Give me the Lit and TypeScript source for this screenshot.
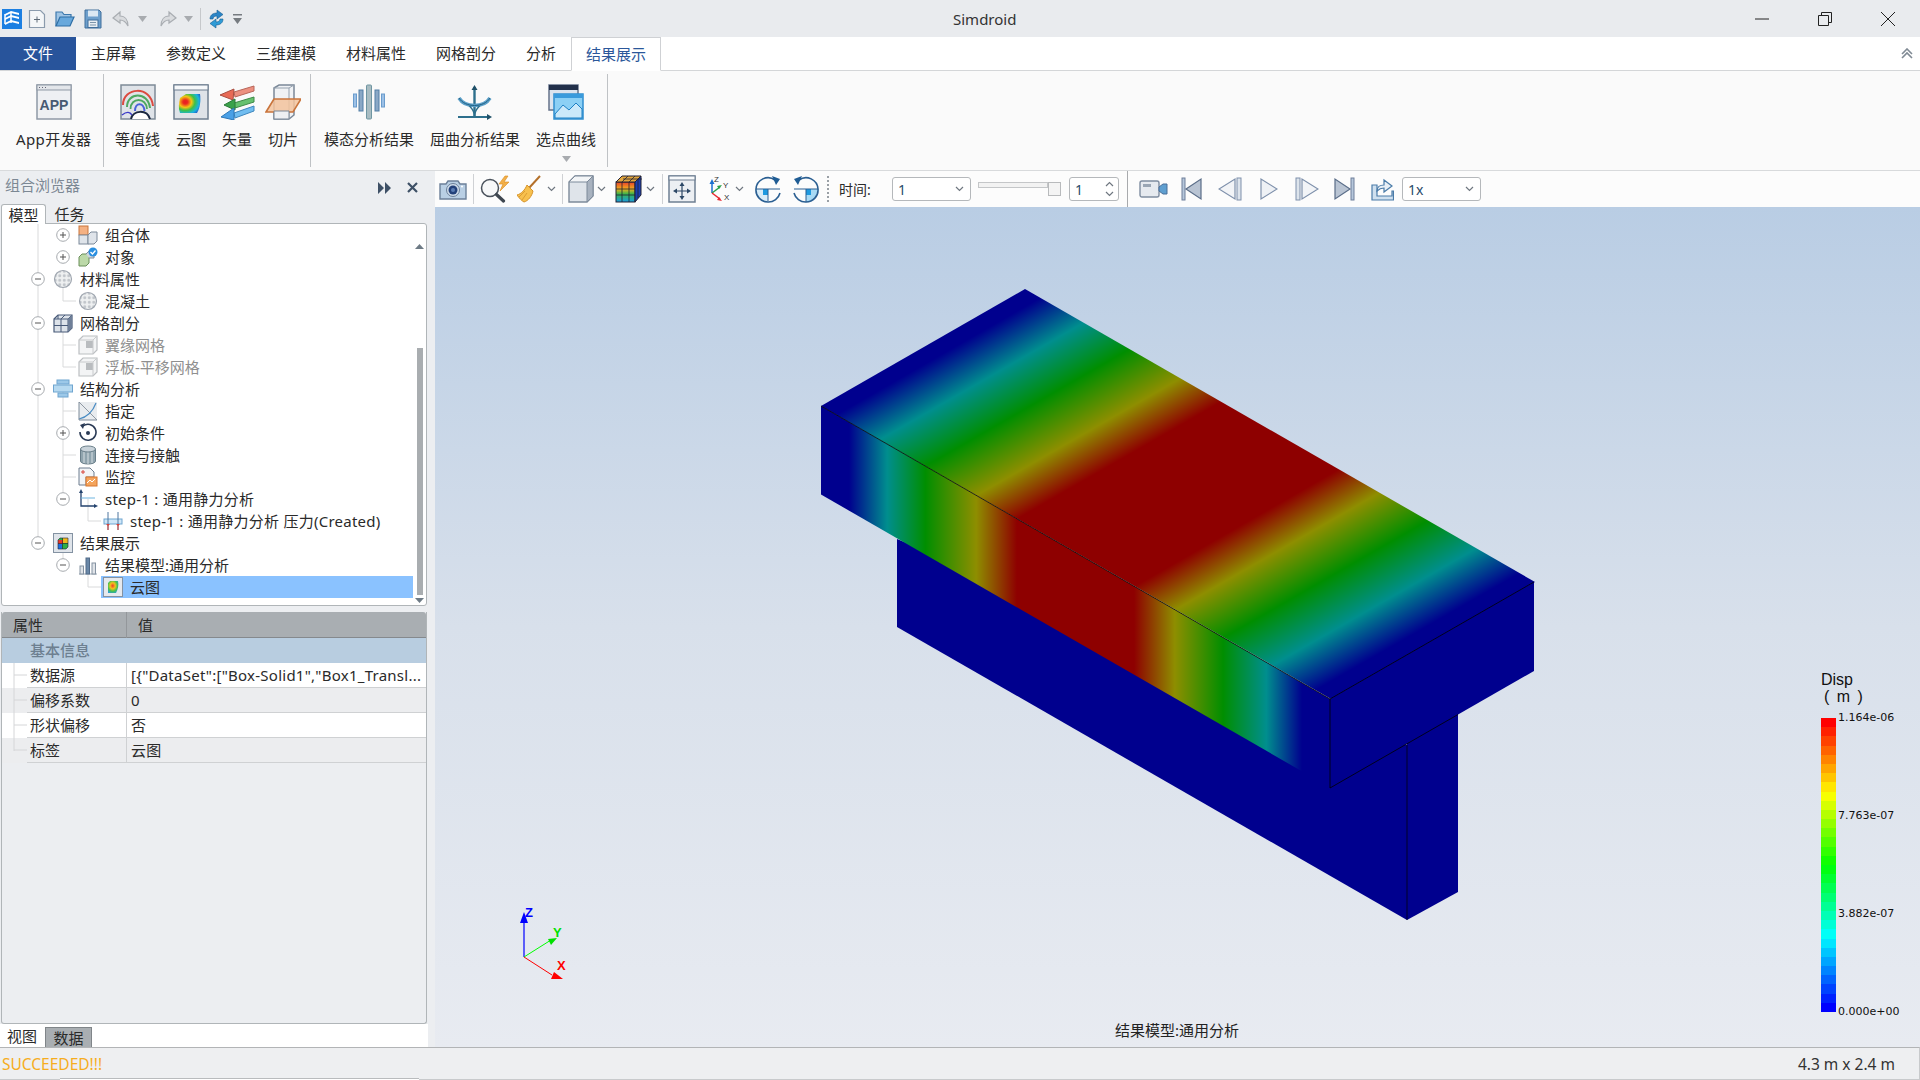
import { LitElement, html, svg, css } from "lit";
import { customElement } from "lit/decorators.js";

const chev = html`<svg width="9" height="6" viewBox="0 0 9 6"><path d="M1 1l3.5 3.5L8 1" fill="none" stroke="#6f7780" stroke-width="1.2"/></svg>`;
const win = (w: number, h: number, inner: unknown) => html`<svg width=${w} height=${h} viewBox="0 0 ${w} ${h}">${inner}</svg>`;

const qa = {
  app: html`<svg width="20" height="20" viewBox="0 0 20 20"><rect width="20" height="20" fill="#1c7fe2"/><path d="M3 5l6-3 8 2v2l-8-2-6 3zM3 9l6-3 8 2v2L9 8l-6 3zM3 14l6-3 8 2v2l-8-2-6 3z" fill="#fff"/><path d="M3 5v10M9 3v11" stroke="#fff" stroke-width="1.5"/></svg>`,
  file: html`<svg width="18" height="20" viewBox="0 0 18 20"><path d="M1.5 1.5h11l4 4v13h-15z" fill="#f4f6f8" stroke="#8b9bad" stroke-width="1.2"/><path d="M6 10.5h6M9 7.5v6" stroke="#5e6b78"/></svg>`,
  open: html`<svg width="20" height="18" viewBox="0 0 20 18"><path d="M1 16V2h6l2 2.5h7V7" fill="#9fc4e4" stroke="#3c78ad" stroke-width="1.2"/><path d="M1 16l4-9h14l-4 9z" fill="#68a8dc" stroke="#2e6ea5" stroke-width="1.2"/></svg>`,
  save: html`<svg width="18" height="20" viewBox="0 0 18 20"><path d="M1 1h14l2 2v16H1z" fill="#6d9fcc" stroke="#406e9b"/><rect x="4" y="1.5" width="10" height="6" fill="#dbe8f3"/><rect x="4" y="11" width="10" height="7.5" fill="#e9eef3" stroke="#406e9b"/><path d="M6 13.5h6M6 16h6" stroke="#7d95ab"/></svg>`,
  undo: html`<svg width="20" height="18" viewBox="0 0 20 18"><path d="M9 2L2 8l7 5V10c4 0 6 2 8 6 0-6-3-10-8-10z" fill="#d9dbde" stroke="#a9adb2" stroke-width="1.2"/></svg>`,
  redo: html`<svg width="20" height="18" viewBox="0 0 20 18"><path d="M11 2l7 6-7 5V10c-4 0-6 2-8 6 0-6 3-10 8-10z" fill="#d9dbde" stroke="#a9adb2" stroke-width="1.2"/></svg>`,
  caret: html`<svg width="9" height="6" viewBox="0 0 9 6"><path d="M0 0h9L4.5 6z" fill="#a8abaf"/></svg>`,
  refresh: html`<svg width="17" height="20" viewBox="0 0 17 20"><path d="M2 10c0-4 3-6 7-6V1l6 4.5L9 10V7c-2 0-4 1-4 3z" fill="#2a84c6" stroke="#1a5e90" stroke-width=".6"/><path d="M15 10c0 4-3 6-7 6v3l-6-4.5L8 10v3c2 0 4-1 4-3z" fill="#2f9bd6" stroke="#1a5e90" stroke-width=".6"/></svg>`,
  drop: html`<svg width="9" height="10" viewBox="0 0 9 10"><path d="M0 0h9v1.5H0zM0 4h9L4.5 10z" fill="#767b80"/></svg>`,
};

const rib = {
  app: win(36, 36, svg`<rect x="1" y="1" width="34" height="34" fill="#eef0f3" stroke="#8f99a6" stroke-width="1.5"/><rect x="1" y="1" width="34" height="5" fill="#e3e6ea" stroke="#8f99a6"/><path d="M3 3.500h1M6 3.500h1M9 3.500h1" stroke="#667"/><text x="18" y="26" text-anchor="middle" font-family="Liberation Sans, sans-serif" font-weight="700" font-size="14" fill="#475a73">APP</text>`),
  contour: win(36, 36, svg`<rect x="1" y="1" width="34" height="34" fill="#dfe3e8" stroke="#7e8a97" stroke-width="1.5"/><path d="M3 21C3 3 31 1 33 22" fill="none" stroke="#dc4a40" stroke-width="2"/><path d="M7 23C7 8 28 7 30 24" fill="none" stroke="#4ea860" stroke-width="2"/><path d="M10.500 25c0-12 16-12 16.500 0" fill="none" stroke="#4ea860" stroke-width="1.800"/><path d="M15 27c0-9 9-9 9.500 0" fill="none" stroke="#4a62d8" stroke-width="2"/><path d="M2 31c5-4 8-3 10 0" fill="none" stroke="#3a3ac8" stroke-width="1.400"/><path d="M11 35c2-9 16-10 19 0" fill="#fff" stroke="#1a2740" stroke-width="2"/>`),
  cloud: win(36, 36, svg`<defs><radialGradient id="rc" cx=".3" cy=".42" r=".8"><stop offset="0" stop-color="#e81c24"/><stop offset=".14" stop-color="#ec2c20"/><stop offset=".36" stop-color="#f4c414"/><stop offset=".56" stop-color="#3cc048"/><stop offset=".8" stop-color="#18b4e0"/><stop offset="1" stop-color="#2457c4"/></radialGradient></defs><rect x="1" y="1" width="34" height="34" fill="#dfe3e8" stroke="#6f7f90" stroke-width="1.5"/><rect x="1" y="1" width="34" height="5" fill="#f6f8fa" stroke="#6f7f90"/><path d="M7 14l6-4h14c1 7 0 14-3 19H7c-2-5-1-10 0-15z" fill="url(#rc)"/>`),
  vector: win(36, 36, svg`<path d="M15 8L35 2v5L16 13z" fill="#ec9080" stroke="#b8675a"/><path d="M15 5L1 11l13 5z" fill="#e86a55" stroke="#a94e40"/><path d="M15 19l20-6v5L16 24z" fill="#66c16e" stroke="#3f8a48"/><path d="M16 15L5 21l11 5z" fill="#3aa24a" stroke="#2b7a38"/><path d="M15 29l20-7v5l-19 7z" fill="#71bdf0" stroke="#3f86bd"/><path d="M15 24L2 33l13 3z" fill="#4aa0e6" stroke="#2f78b8"/>`),
  slice: win(36, 36, svg`<path d="M9 4l5-3h15v30l-5 4H9z" fill="#f0f2f5" stroke="#7b8898" stroke-width="1.5"/><path d="M9 4h15v31M24 4l5-3" fill="none" stroke="#95a1ae"/><path d="M9 15L1 28h27l8-13z" fill="#f3c39c" stroke="#c9743c" stroke-width="1.6" fill-opacity=".85"/><path d="M9 27h15v8H9z" fill="#eef0f3" stroke="#7b8898"/>`),
  modal: win(32, 36, svg`<rect x="13.500" y="1" width="5" height="34" rx="1" fill="#a8bcc2" stroke="#6f96a2"/><rect x="6" y="6" width="4" height="21" fill="#8aa8c6" stroke="#527fa6"/><rect x="22" y="6" width="4" height="21" fill="#8aa8c6" stroke="#527fa6"/><rect x="0.500" y="10" width="3" height="13" fill="#9cc0e6" stroke="#6a9ccc"/><rect x="28.500" y="10" width="3" height="13" fill="#9cc0e6" stroke="#6a9ccc"/>`),
  buckle: win(36, 36, svg`<path d="M1 33h31" stroke="#2d6f8c" stroke-width="2"/><path d="M35 33l-5-3v6z" fill="#1f5068"/><path d="M17.500 3v29" stroke="#2d6f8c" stroke-width="2.400"/><path d="M17.500 1l-3 5h6z" fill="#1f5068"/><path d="M2 14c6 10 25 10 31 0" fill="none" stroke="#5b9fc8" stroke-width="3.500"/><path d="M2 14c6 10 25 10 31 0" fill="none" stroke="#1f5f82" stroke-width="1"/><path d="M17.500 32c0-5-3-8-5-10M17.500 32c0-5 3-8 5-10" fill="none" stroke="#2d6f8c" stroke-width="1.500"/>`),
  curve: win(36, 36, svg`<rect x="1" y="1" width="29" height="25" fill="#dce4ee" stroke="#66738a" stroke-width="1.500"/><rect x="1" y="1" width="29" height="5" fill="#22304a"/><rect x="6" y="10" width="29" height="25" fill="#8cd0f5" stroke="#2f8ed0" stroke-width="1.500"/><rect x="6" y="10" width="29" height="4" fill="#3a9bdc"/><path d="M7 30l8-9 6 5 7-7 6 6v9H7z" fill="#cbe9fa" stroke="#1f80c4"/>`),
};

const tool = {
  camera: win(28, 22, svg`<path d="M1 6h6l2-3h10l2 3h6v15H1z" fill="#b9cfe4" stroke="#6c8099" stroke-width="1.400"/><circle cx="14" cy="12" r="6.500" fill="#cfdcea" stroke="#6c8099"/><circle cx="14" cy="12" r="4.500" fill="#23417a"/><circle cx="14" cy="12" r="2" fill="#5a7cb4"/><circle cx="23" cy="8.500" r="1" fill="#fff"/>`),
  mag: win(30, 28, svg`<circle cx="10" cy="13" r="8.500" fill="#f7f8f9" stroke="#4a525c" stroke-width="1.500"/><path d="M16.500 19.500l7 6.500" stroke="#3f4750" stroke-width="3.200" stroke-linecap="round"/><path d="M25 1l-6 8h4l-3 7 9-9h-5l4-6z" fill="#f2b04a" stroke="#d88a1c" stroke-width=".6"/>`),
  broom: win(24, 28, svg`<path d="M23 1L12 13" stroke="#b4702a" stroke-width="2"/><path d="M10 10l6 6c-1 5-5 10-9 11-2-1-5-4-7-7 4-1 8-5 10-10z" fill="#f7c04e" stroke="#d6932a"/><path d="M5 25l5-7M2 22l6-6" stroke="#d6932a" stroke-width=".8"/>`),
  cube: win(26, 28, svg`<path d="M1 7l6-6h18v20l-6 6H1z" fill="#dfe4ea" stroke="#7d8a9a" stroke-width="1.400"/><path d="M19 7v20l6-6V1z" fill="#a8b2bf" stroke="#7d8a9a"/><path d="M1 7h18l6-6H7z" fill="#f3f5f7" stroke="#7d8a9a"/>`),
  color: win(27, 28, svg`<defs><linearGradient id="cc" x1="0" y1="0" x2="0" y2="1"><stop offset="0" stop-color="#e8402c"/><stop offset=".35" stop-color="#f2b01c"/><stop offset=".6" stop-color="#37b64c"/><stop offset="1" stop-color="#1a9be0"/></linearGradient></defs><rect x="1" y="7" width="19" height="20" fill="url(#cc)" stroke="#223"/><path d="M1 7l6-6h19l-6 6z" fill="#e2a63e" stroke="#223"/><path d="M20 7l6-6v19l-6 7z" fill="#1c3fb0" stroke="#223"/><path d="M7 7v20M14 7v20M1 14h19M1 20h19M8 4h19M13 1l-6 6M20 1l-6 6M23 4v19" stroke="#223" stroke-width=".8"/>`),
  fit: win(28, 28, svg`<rect x="1" y="1" width="26" height="26" fill="#eceff3" stroke="#6e7f92" stroke-width="1.500"/><rect x="1" y="1" width="26" height="4" fill="#f7f9fb" stroke="#6e7f92"/><path d="M14 9v14M7 16h14" stroke="#2c4766" stroke-width="1.200"/><path d="M14 7l-2.500 4h5zM14 25l-2.500-4h5zM5 16l4-2.500v5zM23 16l-4-2.500v5z" fill="#2c4766"/>`),
  axes: html`<svg width="24" height="28" viewBox="0 0 24 28"><path d="M4 18V7" stroke="#1d6fd0" stroke-width="1.500"/><path d="M4 4L1.500 9h5z" fill="#1d6fd0"/><path d="M4 18l8-6" stroke="#27a04a" stroke-width="1.500"/><path d="M14 10l-5 1 2 3z" fill="#27a04a"/><path d="M4 18l8 6" stroke="#e82830" stroke-width="1.500"/><path d="M14 26l-5-1 2-3z" fill="#e82830"/><text x="6" y="7" font-size="8" font-family="Liberation Sans, sans-serif" fill="#333">Z</text><text x="15" y="13" font-size="8" font-family="Liberation Sans, sans-serif" fill="#333">Y</text><text x="16" y="25" font-size="8" font-family="Liberation Sans, sans-serif" fill="#333">X</text></svg>`,
  rot1: win(26, 28, svg`<path d="M1 14h12v13C6 27 1 21 1 14z" fill="#d8ecf8"/><path d="M13 14h12" stroke="#2b5f92"/><rect x="8" y="14" width="5" height="6" fill="#1e9ae0"/><path d="M1 14h12v12" fill="none" stroke="#2b5f92"/><path d="M20 5A12 12 0 0 0 1 14a12 12 0 0 0 12 13 12 12 0 0 0 12-9" fill="none" stroke="#2b5f92" stroke-width="1.600"/><path d="M17 1l8 3-4 6z" fill="#1f5c94"/>`),
  rot2: win(26, 28, svg`<path d="M13 14h12c0 7-5 13-12 13z" fill="#a8daf5"/><rect x="13" y="14" width="5" height="6" fill="#1e9ae0"/><path d="M1 14h24M13 14v13" stroke="#2b5f92"/><path d="M6 5A12 12 0 0 1 25 14a12 12 0 0 1-12 13A12 12 0 0 1 1 18" fill="none" stroke="#2b5f92" stroke-width="1.600"/><path d="M9 1L1 4l4 6z" fill="#1f5c94"/>`),
  video: win(29, 20, svg`<rect x="1" y="2" width="19" height="16" rx="2" fill="#e6eaef" stroke="#7f8da0" stroke-width="1.400"/><rect x="4" y="5" width="8" height="3" fill="#9aa6b4"/><path d="M20 8l4-3h4v10h-4l-4-3z" fill="#5f9fd0" stroke="#4a6f99"/>`),
  first: win(21, 24, svg`<rect x="1" y="1" width="3" height="22" fill="#b6c7db" stroke="#6e7f9a"/><path d="M20 2v20L5 12z" fill="#b9c4d3" stroke="#5a6d88" stroke-width="1.200"/>`),
  prev: win(24, 24, svg`<path d="M17 2v20L1 12z" fill="#f2f4f7" stroke="#7e90ab" stroke-width="1.200"/><rect x="19" y="1" width="4" height="22" fill="#dde4ec" stroke="#7e90ab"/>`),
  play: win(18, 24, svg`<path d="M1 2v20l16-10z" fill="#eef1f5" stroke="#7e90ab" stroke-width="1.200"/>`),
  next: win(24, 24, svg`<rect x="1" y="1" width="4" height="22" fill="#dde4ec" stroke="#7e90ab"/><path d="M7 2v20l16-10z" fill="#f2f4f7" stroke="#7e90ab" stroke-width="1.200"/>`),
  last: win(21, 24, svg`<path d="M1 2v20l15-10z" fill="#b9c4d3" stroke="#5a6d88" stroke-width="1.200"/><rect x="17" y="1" width="3" height="22" fill="#b6c7db" stroke="#6e7f9a"/>`),
  share: win(23, 24, svg`<path d="M1 8h5v11h15v-5h1.500v9H1z" fill="#cfe0ef" stroke="#4a7ba8" stroke-width="1.200"/><path d="M6 14c0-4 3-6 7-6V3l8 6-8 6v-4c-3 0-5 1-7 3z" fill="#e8eff6" stroke="#4a7ba8" stroke-width="1.200"/>`),
};

const tree = {
  combo: win(20, 20, svg`<rect x="1" y="1" width="9" height="9" fill="#f4b183" stroke="#c9763c"/><rect x="1" y="10" width="9" height="9" fill="#dfe4ea" stroke="#7d8a9a"/><path d="M10 10l3-3h6v9l-3 3h-6z" fill="#dfe4ea" stroke="#7d8a9a"/>`),
  object: win(20, 20, svg`<path d="M1 10l3-3h7v9l-3 3H1z" fill="#bcd9a8" stroke="#6a8f5a"/><path d="M8 7l3-3h5v7h-5" fill="#cfd6dd" stroke="#7d8a9a"/><circle cx="15" cy="5" r="4.500" fill="#2a8fe0"/><path d="M12.500 5l2 2 3-3.500" fill="none" stroke="#fff" stroke-width="1.300"/>`),
  mat: win(20, 20, svg`<defs><pattern id="dots" width="4.500" height="4.500" patternUnits="userSpaceOnUse"><rect width="4.500" height="4.500" fill="#eef0f1"/><circle cx="2.250" cy="2.250" r="1.500" fill="#c0c5ca"/></pattern></defs><circle cx="10" cy="10" r="8.500" fill="url(#dots)" stroke="#a0a7b0" stroke-width="1.200"/>`),
  mesh: win(20, 20, svg`<path d="M1 6l4-4h14v13l-4 4H1z" fill="#dde3ea" stroke="#485a78" stroke-width="1.200"/><path d="M1 6h14v13M15 6l4-4M1 12.500h14M8 6v13M5 2v4M12 2L8 6" fill="none" stroke="#485a78"/><path d="M15 6l4-4v13l-4 4z" fill="#6f7f98"/>`),
  meshg: win(20, 20, svg`<path d="M1 5l4-4h14v14l-4 4H1z" fill="#f3f4f5" stroke="#bcbfc2" stroke-width="1.200"/><rect x="8" y="6" width="7" height="7" fill="#b9bcbf"/><path d="M1 5h14v14M15 5l4-4" fill="none" stroke="#c8cacc"/>`),
  struct: win(20, 20, svg`<rect x="4" y="1" width="12" height="4" fill="#9cc8e8" stroke="#6fa5d0"/><rect x="0.500" y="6" width="19" height="7" fill="#b6d9f0" stroke="#6fa5d0"/><rect x="5" y="14" width="10" height="4" fill="#9cc8e8" stroke="#6fa5d0"/>`),
  assign: win(20, 20, svg`<rect x="1" y="1" width="18" height="18" fill="#e9ecef"/><path d="M1 1l18 18" stroke="#8f98a3"/><path d="M1 18c9-2 14-8 17-16" fill="none" stroke="#4b8dc4" stroke-width="1.200"/><path d="M1 1v18h18" fill="none" stroke="#7c8a99"/>`),
  init: win(20, 20, svg`<path d="M5 3a8 8 0 1 1-3 6" fill="none" stroke="#2a3a55" stroke-width="1.600"/><path d="M7 0L2 2l3 4z" fill="#2a3a55"/><circle cx="10" cy="10" r="2" fill="#2a3a55"/>`),
  contact: win(18, 20, svg`<path d="M1.500 4v12c0 4 15 4 15 0V4" fill="#90a4ae" stroke="#6a7f8a"/><path d="M5 6v12M9 7v12M13 6v12" stroke="#d8e0e4"/><ellipse cx="9" cy="4" rx="7.500" ry="3" fill="#c9d3da" stroke="#6a7f8a"/>`),
  monitor: win(20, 20, svg`<path d="M1 1h11l4 4v5H8v8H1z" fill="#f2f4f6" stroke="#6d7d8f"/><path d="M3 5h4M5 3v4" stroke="#d8453a"/><rect x="8" y="10" width="11" height="9" fill="#f4a45c" stroke="#d9772c"/><path d="M9 16l3-3 2 2 3-3" fill="none" stroke="#fff"/>`),
  step: win(20, 20, svg`<path d="M3 3v14h15" fill="none" stroke="#24436e" stroke-width="1.300"/><path d="M3 0L1 4h4zM20 17l-4-2v4z" fill="#24436e"/><path d="M3 9h14" stroke="#6fb5e0"/>`),
  load: win(20, 20, svg`<rect x="1" y="8" width="18" height="5" fill="#cfe6f7" stroke="#6fa5d0"/><path d="M5 1v18M15 1v18" stroke="#4e76a0"/><path d="M5 15l-2-2h4zM15 15l-2-2h4z" fill="#d8453a"/><path d="M5 14v5M15 14v5" stroke="#d8453a"/>`),
  result: win(20, 20, svg`<rect x=".5" y=".5" width="19" height="19" fill="#dfe4ea" stroke="#8492a2"/><path d="M5 7l2-2h8v9l-2 2H5z" fill="#2fae45"/><path d="M5 7h5v4H5z" fill="#e8392a"/><path d="M10 5h5v5h-5z" fill="#f0b61e"/><path d="M5 11h4v5H5z" fill="#1e6fe0"/><path d="M5 7l2-2h8v9l-2 2H5zM9.500 5v11M5 10.500h10" fill="none" stroke="#223" stroke-width=".6"/>`),
  model: win(20, 20, svg`<path d="M1 19h18" stroke="#9aa6b2"/><rect x="2" y="11" width="3.500" height="8" fill="#dfe3e8" stroke="#8593a2"/><rect x="8" y="3" width="3.500" height="16" fill="#6a88a8" stroke="#506a88"/><rect x="14" y="8" width="3.500" height="11" fill="#dfe3e8" stroke="#8593a2"/>`),
  cloud: win(20, 20, svg`<defs><radialGradient id="tc" cx=".45" cy=".4" r=".7"><stop offset="0" stop-color="#ef3a2c"/><stop offset=".35" stop-color="#f2c21c"/><stop offset=".65" stop-color="#45c24d"/><stop offset="1" stop-color="#2a9ae0"/></radialGradient></defs><rect x=".5" y=".5" width="19" height="19" fill="#e6e9ed" stroke="#8492a2"/><path d="M5 6l2-2h8c1 4 0 8-2 12H5z" fill="url(#tc)"/>`),
};

type Row = { lvl: number; exp?: string; icon: keyof typeof tree; label: string; dim?: boolean; sel?: boolean };
const rows: Row[] = [
  { lvl: 1, exp: "+", icon: "combo", label: "组合体" },
  { lvl: 1, exp: "+", icon: "object", label: "对象" },
  { lvl: 0, exp: "-", icon: "mat", label: "材料属性" },
  { lvl: 1, icon: "mat", label: "混凝土" },
  { lvl: 0, exp: "-", icon: "mesh", label: "网格剖分" },
  { lvl: 1, icon: "meshg", label: "翼缘网格", dim: true },
  { lvl: 1, icon: "meshg", label: "浮板-平移网格", dim: true },
  { lvl: 0, exp: "-", icon: "struct", label: "结构分析" },
  { lvl: 1, icon: "assign", label: "指定" },
  { lvl: 1, exp: "+", icon: "init", label: "初始条件" },
  { lvl: 1, icon: "contact", label: "连接与接触" },
  { lvl: 1, icon: "monitor", label: "监控" },
  { lvl: 1, exp: "-", icon: "step", label: "step-1 : 通用静力分析" },
  { lvl: 2, icon: "load", label: "step-1 : 通用静力分析 压力(Created)" },
  { lvl: 0, exp: "-", icon: "result", label: "结果展示" },
  { lvl: 1, exp: "-", icon: "model", label: "结果模型:通用分析" },
  { lvl: 2, icon: "cloud", label: "云图", sel: true },
];

const props = [
  { k: "数据源", v: '[{"DataSet":["Box-Solid1","Box1_Transl...' },
  { k: "偏移系数", v: "0" },
  { k: "形状偏移", v: "否" },
  { k: "标签", v: "云图" },
];

const ry = (i: number) => 11 + 22 * i;
const hook = (x: number, i: number, x2: number) => `M${x} ${ry(i)}H${x2}`;
const guides = [
  `M36 0V${ry(14)}`,
  `M61 ${ry(2)}V${ry(3)}`, hook(61, 3, 74),
  `M61 ${ry(4)}V${ry(6)}`, hook(61, 5, 74), hook(61, 6, 74),
  `M61 ${ry(7)}V${ry(12)}`, hook(61, 8, 74), hook(61, 10, 74), hook(61, 11, 74),
  `M61 ${ry(14)}V${ry(15)}`,
  `M86 ${ry(12)}V${ry(13)}`, hook(86, 13, 99),
  `M86 ${ry(15)}V${ry(16)}`, hook(86, 16, 99),
].join("");

// legend colours, bottom to top of the scale
const legendBands = (() => {
  const stops = [[0, 0, 255], [0, 255, 255], [0, 255, 0], [255, 255, 0], [255, 0, 0]];
  const out: string[] = [];
  const n = 32;
  for (let i = n - 1; i >= 0; i--) {
    const t = (i / (n - 1)) * 4;
    const a = Math.min(Math.floor(t), 3);
    const f = t - a;
    const c = stops[a].map((v, j) => Math.round(v + (stops[a + 1][j] - v) * f));
    out.push(`rgb(${c.join(",")})`);
  }
  return out;
})();

// contour stops along the beam, the side face runs a bit wider at both ends
const blue = "#00008e";
const bandStops = (a: number, b: number, c: number, d: number): [number, string][] => [
  [0, blue], [a, blue], [b, "#008e8e"],
  [0.205, "#008e00"], [0.305, "#8e8e00"], [0.385, "#8e0000"],
  [0.615, "#8e0000"], [0.695, "#8e8e00"], [0.79, "#008e00"],
  [c, "#008e8e"], [d, blue], [1, blue],
];
const stopEls = (list: [number, string][]) => list.map(([o, col]) => svg`<stop offset=${o} stop-color=${col}/>`);

@customElement("app-root")
export class AppRoot extends LitElement {
  static styles = css`
    :host {
      display: block;
      width: 1920px;
      height: 1080px;
      overflow: hidden;
      font-family: "Noto Sans", "Noto Sans CJK SC", sans-serif;
      font-size: 15px;
      color: #2a2a2a;
      background: #eceef1;
    }
    svg { display: block; flex: none; }

    .app { display: flex; flex-direction: column; height: 100%; }

    .title { display: grid; grid-template-columns: 953px 1fr auto; align-items: center; height: 37px; background: #e9ebee; }
    .qa { display: grid; grid-template-columns: 26px 27px 29px 27px 27px 20px 26px 16px 8px 25px auto; align-items: center; padding-left: 2px; }
    .qa .sep { width: 1px; height: 22px; background: #c6c8cb; }
    .title-text { font-size: 15px; color: #333; }
    .winbtns { display: flex; padding-right: 1px; }
    .winbtn { width: 63px; height: 37px; display: flex; align-items: center; justify-content: center; }

    .tabs { display: flex; align-items: stretch; height: 33px; background: #fff; border-bottom: 1px solid #d4d6d8; }
    .tab { padding: 0 15px; line-height: 32px; white-space: nowrap; }
    .tab.file { width: 76px; box-sizing: border-box; text-align: center; background: #28549b; color: #fff; }
    .tab.active { color: #2b579a; border: 1px solid #cfd1d4; border-bottom: 1px solid #fff; margin-bottom: -1px; padding: 0 14px; line-height: 32px; background: #fff; }
    .tabs-end { flex: 1; display: flex; align-items: center; justify-content: flex-end; padding-right: 7px; }

    .ribbon { display: flex; height: 99px; background: #fafafa; border-bottom: 1px solid #d8dadc; padding-left: 11px; }
    .group { display: flex; box-sizing: border-box; border-right: 1px solid #bfc2c5; margin: 3px 0; }
    .rbtn { display: flex; flex-direction: column; align-items: center; padding: 10px 5px 0; white-space: nowrap; }
    .rbtn .ic { height: 36px; display: flex; align-items: center; }
    .rbtn .lb { margin-top: 8px; line-height: 22px; font-size: 15px; }
    .rbtn .more { margin-top: 6px; }
    .rbtn.wide { padding-right: 8px; }
    .g1 { width: 93px; }
    .g1 .lb { letter-spacing: .4px; }
    .g2 { width: 207px; padding-left: 6px; }
    .g3 { width: 297px; padding-left: 5px; }
    .g3 .rbtn { padding-left: 8px; padding-right: 8px; }

    .main { flex: 1; display: flex; min-height: 0; }

    .left { width: 428px; display: flex; flex-direction: column; background: #eceef1; flex: none; }
    .lhead { height: 33px; display: flex; align-items: center; padding: 0 10px 0 5px; color: #7c8894; font-size: 15px; }
    .lhead .name { line-height: 26px; margin-bottom: 5px; }
    .lhead .sp { flex: 1; }
    .lhead .x { margin-left: 16px; }
    .ltabs { display: flex; height: 19px; padding-left: 1px; align-items: flex-start; position: relative; z-index: 1; }
    .ltab { width: 45px; box-sizing: border-box; height: 20px; line-height: 20px; text-align: center; }
    .ltab.on { background: #fff; border: 1px solid #b0b5b8; border-bottom: none; border-radius: 3px 3px 0 0; }
    .ltab.off { margin-left: 1px; }
    .treebox { height: 383px; margin: 0 1px; box-sizing: border-box; background: #fff; border: 1px solid #b0b5b8; border-radius: 0 3px 3px 3px; display: flex; overflow: hidden; }
    .rows { width: 411px; position: relative; flex: none; }
    .rows .guides { position: absolute; left: 0; top: 0; }
    .row { display: flex; align-items: center; height: 22px; position: relative; white-space: nowrap; }
    .slot { width: 22px; height: 22px; display: flex; align-items: center; justify-content: center; flex: none; }
    .item { flex: 1; display: flex; align-items: center; height: 22px; min-width: 0; margin-left: 2px; }
    .item .ic { width: 24px; display: flex; justify-content: center; flex: none; }
    .item .tx { margin-left: 5px; line-height: 22px; }
    .item .tx.lat { letter-spacing: .25px; }
    .item.sel { background: #8ac2ff; }
    .row.dim .tx { color: #8f8f8f; }
    .sbar { flex: 1; display: flex; flex-direction: column; align-items: center; padding-top: 20px; }
    .sbar .track { flex: 1; width: 6px; display: flex; flex-direction: column; justify-content: flex-end; margin: 3px 0; }
    .sbar .thumb { height: 247px; background: #a9adb0; }
    .sbar .dn { margin-bottom: 2px; }

    .grid { flex: 1; margin: 6px 1px 0; border: 1px solid #b0b5b8; border-top: none; border-radius: 0 0 3px 3px; background: #eceef1; display: flex; flex-direction: column; position: relative; min-height: 0; }
    .ghead { display: grid; grid-template-columns: 124px 1fr; height: 26px; line-height: 26px; background: #a9aeb2; border-bottom: 1px solid #85898d; box-sizing: border-box; border-radius: 3px 3px 0 0; }
    .ghead div { padding-left: 11px; }
    .ghead div + div { border-left: 1px solid #93979b; }
    .gcat { height: 25px; line-height: 25px; background: #b8cde0; padding-left: 28px; color: #6d7f90; font-weight: 500; }
    .grow { display: grid; grid-template-columns: 124px 1fr; height: 25px; line-height: 24px; background: #fff; }
    .grow.alt { background: #ecedef; }
    .grow .k { margin-left: 25px; padding-left: 3px; border-bottom: 1px solid #cfd1d3; }
    .grow .v { padding-left: 4px; border-left: 1px solid #cfd1d3; border-bottom: 1px solid #cfd1d3; white-space: nowrap; overflow: hidden; letter-spacing: .25px; }
    .grid .pguide { position: absolute; left: 0; top: 51px; }
    .btabs { height: 23px; background: #fff; display: flex; align-items: flex-end; padding-left: 7px; }
    .btab { line-height: 22px; }
    .btab.on { margin-left: 8px; width: 47px; box-sizing: border-box; height: 20px; line-height: 20px; text-align: center; background: #a9aeb2; border: 1px solid #808589; border-bottom: none; }

    .gutter { width: 7px; flex: none; background: #eceef1; }
    .right { flex: 1; display: flex; flex-direction: column; min-width: 0; }
    .tools { height: 36px; background: #fcfcfc; display: grid; align-items: center; padding-left: 4px;
      grid-template-columns: 34px 7px 37px 30px 15px 6px 29px 18px 31px 16px 6px 40px 27px 20px 38px 34px 12px 53px 86px 91px 58px 12px 42px 37px 42px 35px 39px 37px 31px 1fr; }
    .vsep { width: 1px; height: 30px; background: #cfd1d4; }
    .vsep.dark { height: 36px; background: #a8aaad; }
    .dots { width: 2px; height: 26px; background: repeating-linear-gradient(#9aa0a6 0 2px, transparent 2px 4px); }
    .combo { height: 24px; box-sizing: border-box; border: 1px solid #b5b8bb; border-radius: 3px; background: #fff; display: flex; align-items: center; justify-content: space-between; padding: 0 6px 0 5px; font-size: 14px; color: #2a4a6a; }
    .combo.w79 { width: 79px; }
    .combo.w50 { width: 50px; padding-right: 4px; }
    .spin { display: flex; flex-direction: column; gap: 4px; }
    .slider { width: 83px; display: flex; align-items: flex-start; height: 14px; }
    .slider .rail { flex: 1; height: 4px; background: #f2f2f2; border: 1px solid #c4c6c8; }
    .slider .knob { width: 11px; height: 12px; background: #f4f4f4; border: 1px solid #b8babc; }
    .time { font-size: 14px; white-space: nowrap; }

    .view { flex: 1; position: relative; background: linear-gradient(#b9cde4, #d8e0eb 50%, #e8ebf1); overflow: hidden; }
    .canvas { position: absolute; left: 0; top: 0; }
    .legend { position: absolute; left: 1386px; top: 464px; width: 110px; }
    .legend .t { font-family: "Liberation Sans", sans-serif; font-size: 16px; line-height: 17px; color: #111; }
    .legend .u { padding-left: 3px; letter-spacing: 1.5px; }
    .lbody { display: flex; margin-top: 13px; }
    .bar { width: 15px; height: 294px; display: flex; flex-direction: column; flex: none; }
    .bar div { flex: 1; }
    .ticks { margin-top: -6px; margin-left: 2px; display: flex; flex-direction: column; justify-content: space-between; height: 306px; font-family: "DejaVu Sans", sans-serif; font-size: 11px; line-height: 12px; color: #111; }
    .caption { position: absolute; left: 0; right: 0; bottom: 9px; text-align: center; font-size: 15px; line-height: 16px; color: #222; margin-left: -1px; }

    .status { height: 33px; box-sizing: border-box; background: #eeeff1; border-top: 1px solid #b2b4b6; border-bottom: 1px solid #c8cacc; border-right: 1px solid #c8cacc; display: flex; align-items: center; justify-content: space-between; padding: 0 24px 0 2px; position: relative; }
    .status::after { content: ""; position: absolute; left: 60px; bottom: -1px; width: 359px; height: 1px; border-top: 1px solid #b9bbbd; background: #fff; }
    .ok { color: #f6ad1e; font-size: 15.500px; }
    .size { color: #333; font-size: 15.500px; }
  `;

  private qaBar() {
    return html`<div class="qa">
      ${qa.app}${qa.file}${qa.open}${qa.save}${qa.undo}${qa.caret}${qa.redo}${qa.caret}<div class="sep"></div>${qa.refresh}${qa.drop}
    </div>`;
  }

  private ribbonBtn(icon: unknown, label: string, cls = "", more = false) {
    return html`<div class="rbtn ${cls}"><div class="ic">${icon}</div><div class="lb">${label}</div>
      ${more ? html`<div class="more">${qa.caret}</div>` : ""}</div>`;
  }

  private treeRow(r: Row) {
    const pad = 25 + 25 * r.lvl;
    const exp = r.exp
      ? html`<svg width="14" height="14" viewBox="0 0 14 14"><circle cx="7" cy="7" r="6.300" fill="#fff" stroke="#a6aaae"/><path d="M4 7h6${r.exp === "+" ? "M7 4v6" : ""}" stroke="#555"/></svg>`
      : "";
    return html`<div class="row ${r.dim ? "dim" : ""}" style="padding-left:${pad}px">
      <div class="slot">${exp}</div>
      <div class="item ${r.sel ? "sel" : ""}"><div class="ic">${tree[r.icon]}</div><div class="tx ${/[a-z]/i.test(r.label) ? "lat" : ""}">${r.label}</div></div>
    </div>`;
  }

  private toolbar() {
    return html`<div class="tools">
      ${tool.camera}<div class="vsep"></div>${tool.mag}${tool.broom}${chev}<div class="vsep"></div>
      ${tool.cube}${chev}${tool.color}${chev}<div class="vsep"></div>
      ${tool.fit}${tool.axes}${chev}${tool.rot1}${tool.rot2}<div class="dots"></div>
      <div class="time">时间:</div>
      <div class="combo w79"><span>1</span>${chev}</div>
      <div class="slider"><div class="rail"></div><div class="knob"></div></div>
      <div class="combo w50"><span>1</span><div class="spin"><svg width="9" height="6" viewBox="0 0 9 6"><path d="M1 5l3.500-3.500L8 5" fill="none" stroke="#6f7780" stroke-width="1.200"/></svg>${chev}</div></div>
      <div class="vsep dark"></div>
      ${tool.video}${tool.first}${tool.prev}${tool.play}${tool.next}${tool.last}${tool.share}
      <div class="combo w79"><span>1x</span>${chev}</div>
    </div>`;
  }

  private model() {
    // page coordinates, the viewBox starts where the view does
    return html`<svg class="canvas" width="1485" height="840" viewBox="435 207 1485 840">
      <defs>
        <linearGradient id="bandTop">${stopEls(bandStops(0.03, 0.115, 0.885, 0.97))}</linearGradient>
        <linearGradient id="bandSide">${stopEls(bandStops(0.055, 0.13, 0.875, 0.945))}</linearGradient>
      </defs>
      <path d="M897 539L1407 745V920L897 627Z" fill=${blue}/>
      <path d="M1407 735L1458 705V892L1407 920Z" fill=${blue}/>
      <path d="M1407 745V920" stroke="#000" stroke-width=".7" fill="none"/>
      <path d="M1330 699L1534 582V671L1330 788Z" fill=${blue}/>
      <rect width="1" height="1" fill="url(#bandSide)" transform="matrix(509 293 0 88.500 821 406)"/>
      <rect width="1" height="1" fill="url(#bandTop)" transform="matrix(510 293 -204 117 1025 289)"/>
      <path d="M821 406L1330 699L1534 582M1330 699V788L1458 714.500" fill="none" stroke="#000" stroke-width=".8"/>
      <g font-family="Liberation Sans, sans-serif" font-weight="700" font-size="13">
        <path d="M524 957V921" stroke="#0000ff" stroke-width="1.200"/><path d="M524 912l-4 11h8z" fill="#0000ff"/>
        <text x="525" y="917" fill="#0000ff">Z</text>
        <path d="M524 957L551 940" stroke="#00ff00"/><path d="M557 938l-9 1 3 6z" fill="#00e000"/>
        <text x="553" y="937" fill="#00e000">Y</text>
        <path d="M524 957L552 975" stroke="#ff0000"/><path d="M563 979l-9-7-3 7z" fill="#ff0000"/>
        <text x="557" y="970" fill="#ff0000">X</text>
      </g>
    </svg>`;
  }

  render() {
    return html`<div class="app">
      <div class="title">
        ${this.qaBar()}
        <div class="title-text">Simdroid</div>
        <div class="winbtns">
          <div class="winbtn"><svg width="14" height="2" viewBox="0 0 14 2"><path d="M0 1h14" stroke="#222"/></svg></div>
          <div class="winbtn"><svg width="14" height="14" viewBox="0 0 14 14"><path d="M3.500 3V.5h10v10H11M.5 3.500h10v10H.5z" fill="none" stroke="#222"/></svg></div>
          <div class="winbtn"><svg width="14" height="14" viewBox="0 0 14 14"><path d="M0 0l14 14M14 0L0 14" stroke="#222"/></svg></div>
        </div>
      </div>

      <div class="tabs">
        <div class="tab file">文件</div>
        ${["主屏幕", "参数定义", "三维建模", "材料属性", "网格剖分", "分析"].map((t) => html`<div class="tab">${t}</div>`)}
        <div class="tab active">结果展示</div>
        <div class="tabs-end"><svg width="12" height="11" viewBox="0 0 12 11"><path d="M1 6l5-5 5 5M1 10l5-5 5 5" fill="none" stroke="#808a94" stroke-width="1.600"/></svg></div>
      </div>

      <div class="ribbon">
        <div class="group g1">${this.ribbonBtn(rib.app, "App开发器")}</div>
        <div class="group g2">
          ${this.ribbonBtn(rib.contour, "等值线", "wide")}${this.ribbonBtn(rib.cloud, "云图")}${this.ribbonBtn(rib.vector, "矢量")}${this.ribbonBtn(rib.slice, "切片")}
        </div>
        <div class="group g3">
          ${this.ribbonBtn(rib.modal, "模态分析结果")}${this.ribbonBtn(rib.buckle, "屈曲分析结果")}${this.ribbonBtn(rib.curve, "选点曲线", "", true)}
        </div>
      </div>

      <div class="main">
        <div class="left">
          <div class="lhead"><span class="name">组合浏览器</span><span class="sp"></span>
            <svg width="13" height="12" viewBox="0 0 13 12"><path d="M0 0l6 6-6 6zM7 0l6 6-6 6z" fill="#3e5066"/></svg>
            <svg class="x" width="11" height="11" viewBox="0 0 11 11"><path d="M1 1l9 9M10 1l-9 9" stroke="#3e5066" stroke-width="2.200"/></svg>
          </div>
          <div class="ltabs"><div class="ltab on">模型</div><div class="ltab off">任务</div></div>
          <div class="treebox">
            <div class="rows">
              <svg class="guides" width="110" height="376" viewBox="0 0 110 376"><path d=${guides} fill="none" stroke="#d9dadb"/></svg>
              ${rows.map((r) => this.treeRow(r))}
            </div>
            <div class="sbar">
              <svg width="9" height="5" viewBox="0 0 9 5"><path d="M0 5l4.500-5L9 5z" fill="#6d7a85"/></svg>
              <div class="track"><div class="thumb"></div></div>
              <svg class="dn" width="9" height="5" viewBox="0 0 9 5"><path d="M0 0l4.500 5L9 0z" fill="#6d7a85"/></svg>
            </div>
          </div>
          <div class="grid">
            <div class="ghead"><div>属性</div><div>值</div></div>
            <div class="gcat">基本信息</div>
            ${props.map((p, i) => html`<div class="grow ${i % 2 ? "alt" : ""}"><div class="k">${p.k}</div><div class="v">${p.v}</div></div>`)}
            <svg class="pguide" width="26" height="90" viewBox="0 0 26 90"><path d="M12 0V88M12 12H25M12 37H25M12 62H25M12 87H25" fill="none" stroke="#d5d6d8"/></svg>
          </div>
          <div class="btabs"><div class="btab">视图</div><div class="btab on">数据</div></div>
        </div>
        <div class="gutter"></div>
        <div class="right">
          ${this.toolbar()}
          <div class="view">
            ${this.model()}
            <div class="legend">
              <div class="t">Disp</div>
              <div class="t u">( m )</div>
              <div class="lbody">
                <div class="bar">${legendBands.map((b) => html`<div style="background:${b}"></div>`)}</div>
                <div class="ticks"><span>1.164e-06</span><span>7.763e-07</span><span>3.882e-07</span><span>0.000e+00</span></div>
              </div>
            </div>
            <div class="caption">结果模型:通用分析</div>
          </div>
        </div>
      </div>

      <div class="status"><span class="ok">SUCCEEDED!!!</span><span class="size">4.3 m x 2.4 m</span></div>
    </div>`;
  }
}
